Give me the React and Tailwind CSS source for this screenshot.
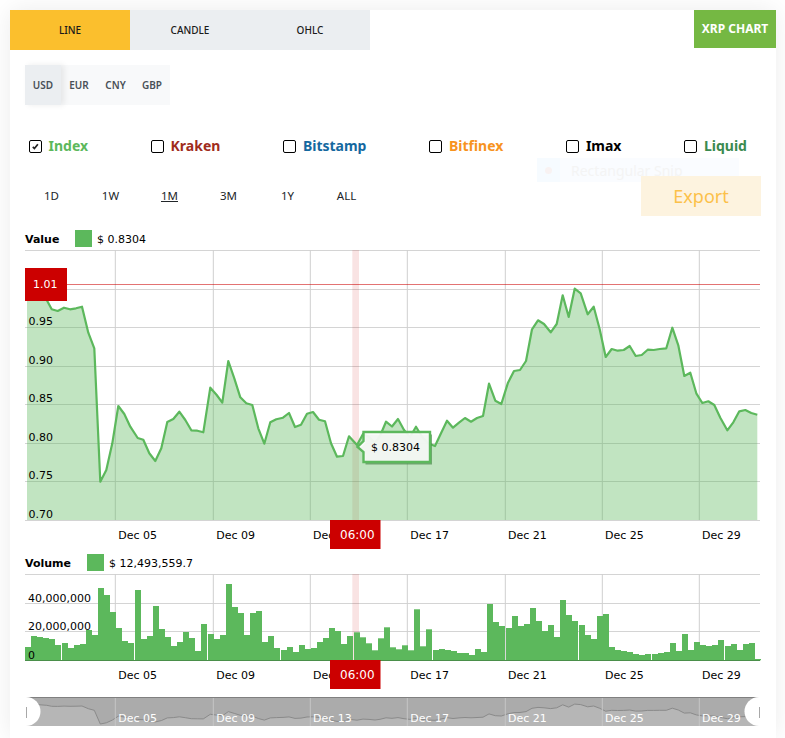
import React from 'react';

const LINE_POINTS = [
  [27, 287], [34, 291], [40, 295], [46.7, 300], [51.7, 309.3], [57.7, 311], [64, 307.7], [70, 309.3], [76, 308.3], [82, 306.7],
  [88.3, 332.7], [94.3, 348.3], [100.3, 481.7], [106.3, 470], [112.3, 443.3], [118.3, 406], [124.3, 414], [130.3, 426.7],
  [137.7, 438], [143.3, 439.7], [149.3, 453.3], [155.3, 461], [161.3, 448.3], [167.3, 422], [173.3, 419], [179.3, 411.7],
  [185.3, 420], [191.3, 430.3], [197.3, 430.7], [203.3, 432.3], [210.3, 387.7], [216.7, 395], [222.3, 402.7], [228.3, 361],
  [234.3, 378.3], [240.3, 397.3], [246.3, 403.3], [252.3, 405], [258.3, 428.3], [264.3, 443.7], [270.3, 422.3], [276.3, 419.3],
  [283, 417.7], [289, 413], [295, 427], [301, 424.7], [307, 413.7], [313, 412], [319, 419.7], [325, 421.3], [331, 443.3],
  [337, 456.7], [343, 456], [349, 436.3], [357, 445], [363, 434], [369, 437], [375, 443], [380, 436], [386, 421.7], [392, 426.5],
  [398, 419], [404, 430], [410, 437], [416, 426.7], [422, 436.7], [428, 443.3], [435, 446], [441, 433.3], [447, 420.7],
  [453, 427.7], [459, 422.7], [465, 418], [471, 421.7], [477, 418], [483, 416], [489, 383.7], [495.3, 400.7], [501.3, 404],
  [508, 382.7], [514, 371], [520, 370], [526, 361], [532, 329.3], [538, 320.3], [544, 324], [550.7, 332.3], [556.7, 324],
  [562.7, 295.3], [568.7, 317], [574.7, 288.7], [580.7, 293.3], [587.7, 314.3], [593.7, 306.7], [599.7, 329.3], [605.7, 357],
  [611.7, 349], [617.7, 350.7], [623.7, 350], [629.7, 346], [635.7, 356], [641.7, 355], [647.7, 349.7], [653.7, 350], [659.7, 349],
  [666.3, 348.3], [672.3, 327.7], [678.3, 345.3], [684.3, 376], [690.3, 372.7], [696.3, 393.3], [702.3, 403], [708.3, 401.3],
  [714.3, 405], [720.3, 417.7], [727.3, 430.3], [733.3, 422.3], [739.3, 411.3], [745.3, 410], [751.3, 413], [757.3, 414.7],
];

// bars are grouped between the daily gaps
const VOLUME_GROUPS = [
  [13.3, 24.3, 23.3, 22.3, 21.3, 15.3],
  [17.3, 12.3, 15.3, 16.3, 30.3, 25.3, 72.3, 65.3, 48.3, 32.3, 19.3, 17.3],
  [70.3, 21.3, 24.3, 54.3, 31.3, 23.3, 14.3, 18.3, 28.3, 22.3, 9.3, 36.3],
  [26.3, 21.3, 25.3, 76.3, 53.3, 47.3, 25.3, 47.3, 49.3, 18.3, 24.3, 12.3],
  [10.3, 13.3, 8.3, 15.3, 11.3, 12.3, 18.3, 22.3, 32.3, 29.3, 16.3, 24.3],
  [28, 23, 17, 10, 22, 33, 13, 11, 15, 10, 51, 14, 31],
  [10.3, 11.3, 10.3, 9.3, 7.3, 7.3, 5.3, 11.3, 8.3, 56.3, 38.3, 34.3],
  [32.3, 44.3, 34.3, 36.3, 52.3, 39.3, 29.3, 35.3, 23.3, 60.3, 45.3, 39.3],
  [35.3, 25.3, 21.3, 44.3, 46.3, 13.3, 10.3, 9.3, 8.3, 6.3, 5.3, 6.3],
  [6.3, 7.3, 8.3, 17.3, 9.3, 26.3, 10.3, 18.3, 15.3, 14.3, 15.3, 20.3],
  [14.3, 16.3, 10.3, 16.3, 17.3, 1.3],
];

const VOLUME_BARS = [];
let barX = 25;
VOLUME_GROUPS.forEach((group) => {
  group.forEach((h) => {
    VOLUME_BARS.push({ x: barX, h });
    barX += 6;
  });
  barX += 1;
});

const GRID_X = [115.3, 213.3, 310.3, 407.3, 505.3, 602.3, 699.3];
const DATE_LABELS = [
  ['Dec 05', 118.3], ['Dec 09', 216.3], ['Dec 13', 313], ['Dec 17', 410.3], ['Dec 21', 508], ['Dec 25', 605], ['Dec 29', 702],
];
const VALUE_GRID_Y = [250.5, 289.5, 327.5, 366.5, 404.5, 443.5, 481.5, 520.5];
const VALUE_LABELS = [['0.95', 325], ['0.90', 364], ['0.85', 402], ['0.80', 441], ['0.75', 479], ['0.70', 518]];

const SOURCES = [
  { name: 'Index', color: 'text-[#5cb85c]', checked: true },
  { name: 'Kraken', color: 'text-[#a02c1c]' },
  { name: 'Bitstamp', color: 'text-[#14689f]' },
  { name: 'Bitfinex', color: 'text-[#f7931e]' },
  { name: 'Imax', color: 'text-black' },
  { name: 'Liquid', color: 'text-[#3a8a4f]' },
];

const toPath = (points) => points.map(([x, y], i) => `${i === 0 ? 'M' : 'L'}${x},${y}`).join(' ');
const navPoints = LINE_POINTS.map(([x, y]) => [x, +(674.4 + y * 0.103).toFixed(1)]);

const chartText = "font-['DejaVu_Sans',sans-serif] text-[11px]";

const TimeAxis = ({ y }) => (
  <>
    {DATE_LABELS.map(([label, x]) => (
      <text key={label} x={x} y={y} className={`${chartText} fill-black`}>{label}</text>
    ))}
  </>
);

const CursorLabel = ({ y }) => (
  <>
    <rect x="330" y={y} width="50.5" height="29" fill="#cc0000" />
    <text x="340" y={y + 19} className={`${chartText} fill-white text-[12px]`}>06:00</text>
  </>
);

const ValueChart = () => (
  <svg viewBox="25 250 736 300" className="ml-[15px] mt-[3px] block h-[300px] w-[736px]">
    {VALUE_GRID_Y.map((y) => (
      <line key={y} x1="25" x2="760" y1={y} y2={y} stroke="#d4d4d4" />
    ))}
    {GRID_X.map((x) => (
      <line key={x} x1={x} x2={x} y1="250" y2="520" stroke="#cfcfcf" />
    ))}
    <rect x="352.3" y="250" width="6.7" height="270" fill="#cc0000" fillOpacity="0.11" />
    <path d={`${toPath(LINE_POINTS)} L757.3,520 L27,520 Z`} fill="#5cb85c" fillOpacity="0.38" />
    <path d={toPath(LINE_POINTS)} fill="none" stroke="#5cb85c" strokeWidth="2.2" strokeLinejoin="round" />
    <line x1="25" x2="760" y1="284.5" y2="284.5" stroke="#cc0000" strokeOpacity="0.55" />
    {VALUE_LABELS.map(([label, y]) => (
      <text key={label} x="28.5" y={y} className={`${chartText} fill-black`}>{label}</text>
    ))}
    <rect x="25" y="268" width="42" height="33" fill="#cc0000" />
    <text x="33" y="288" className={`${chartText} fill-white`}>1.01</text>
    <path d="M365.5,434.5 H432 V464.5 H365.5 V454 L359.5,449 L365.5,443 Z" fill="#4f8a4f" fillOpacity="0.7" />
    <path d="M363.5,432 H430 V462 H363.5 V452 L357.5,447 L363.5,441 Z" fill="#ffffff" fillOpacity="0.9" stroke="#5cb85c" strokeWidth="2.4" />
    <text x="371" y="451" className={`${chartText} fill-black`}>$ 0.8304</text>
    <TimeAxis y={539} />
    <CursorLabel y={520} />
  </svg>
);

const VolumeChart = () => (
  <svg viewBox="25 574 736 116" className="ml-[15px] mt-[3px] block h-[116px] w-[736px]">
    {[574.5, 603.5, 631.5].map((y) => (
      <line key={y} x1="25" x2="760" y1={y} y2={y} stroke="#d4d4d4" />
    ))}
    {GRID_X.map((x) => (
      <line key={x} x1={x} x2={x} y1="574" y2="660" stroke="#cfcfcf" />
    ))}
    <rect x="352.3" y="574" width="6.7" height="86" fill="#cc0000" fillOpacity="0.11" />
    {VOLUME_BARS.map(({ x, h }) => (
      <rect key={x} x={x} y={660.3 - h} width="6" height={h} fill="#5cb85c" />
    ))}
    <line x1="25" x2="760" y1="660.5" y2="660.5" stroke="#4a8f4a" />
    <text x="28" y="602" className={`${chartText} fill-black`}>40,000,000</text>
    <text x="28" y="630" className={`${chartText} fill-black`}>20,000,000</text>
    <text x="28" y="659" className={`${chartText} fill-black`}>0</text>
    <TimeAxis y={679} />
    <CursorLabel y={660} />
  </svg>
);

const NavHandle = ({ cx, barX }) => (
  <>
    <circle cx={cx} cy="711.5" r="14.5" fill="#ffffff" />
    <line x1={barX} x2={barX} y1="707" y2="718" stroke="#a8a8a8" />
  </>
);

const Navigator = () => (
  <svg viewBox="25 697 736 29" className="ml-[15px] mt-[7px] block h-[29px] w-[736px]">
    <rect x="25" y="697" width="735" height="29" fill="#ababab" />
    <path d={`${toPath(navPoints)} L757.3,726 L27,726 Z`} fill="#b6b6b6" />
    <path d={toPath(navPoints)} fill="none" stroke="#8a8a8a" />
    <line x1="25" x2="760" y1="697.5" y2="697.5" stroke="#808080" />
    {GRID_X.map((x) => (
      <line key={x} x1={x} x2={x} y1="698" y2="726" stroke="#c6c6c6" />
    ))}
    {DATE_LABELS.map(([label, x]) => (
      <text key={label} x={x} y="722" className={`${chartText} fill-white`}>{label}</text>
    ))}
    <NavHandle cx={26} barX={26.5} />
    <NavHandle cx={759} barX={759.5} />
  </svg>
);

const SourceCheck = ({ name, color, checked }) => (
  <label className="flex items-center gap-[6.5px]">
    <span className="flex h-[13px] w-[13px] items-center justify-center rounded-[2px] border border-black bg-white">
      {checked && (
        <svg viewBox="0 0 13 13" className="h-[13px] w-[13px]" aria-hidden="true">
          <path d="M3.3 7 L5.2 8.9 L9.3 3.8" fill="none" stroke="#222222" strokeWidth="2" />
        </svg>
      )}
    </span>
    <span className={`text-[14px] font-bold leading-[20px] ${color}`}>{name}</span>
  </label>
);

const LegendRow = ({ title, value, gap }) => (
  <div className="ml-[15px] flex h-[17px] items-center font-['DejaVu_Sans',sans-serif] text-[11px] text-black">
    <span className={`translate-y-[2px] font-bold ${gap}`}>{title}</span>
    <span className="h-[17px] w-[17px] bg-[#5cb85c]" />
    <span className="ml-[5px] translate-y-[2px]">{value}</span>
  </div>
);

export default function App() {
  return (
    <div className="h-[738px] overflow-hidden bg-white pl-[10px] pt-[10px] font-['Noto_Sans',sans-serif]">
      <div className="relative h-[728px] w-[766px] bg-white shadow-[0_0_24px_rgba(0,0,0,0.08)]">
        <div className="flex items-start justify-between">
          <div className="flex">
            <button className="h-[40px] w-[120px] bg-[#fbbf2d] text-[10px] font-medium text-[#1a1a1a]">LINE</button>
            <button className="h-[40px] w-[120px] bg-[#ebeef1] text-[10px] font-medium text-[#1a1a1a]">CANDLE</button>
            <button className="h-[40px] w-[120px] bg-[#ebeef1] text-[10px] font-medium text-[#1a1a1a]">OHLC</button>
          </div>
          <div className="flex h-[38px] w-[82px] items-center justify-center bg-[#75b843] text-[12px] font-bold text-white">XRP CHART</div>
        </div>

        <div className="ml-[15px] mt-[15px] flex h-[40px] w-[145px] bg-[#f8f9fa] text-[10px] font-semibold text-[#495057]">
          <span className="flex w-[36px] items-center justify-center bg-[#ebeef1] shadow-[3px_0_6px_rgba(0,0,0,0.08)]">USD</span>
          <span className="flex w-[36px] items-center justify-center">EUR</span>
          <span className="flex w-[37px] items-center justify-center">CNY</span>
          <span className="flex w-[36px] items-center justify-center">GBP</span>
        </div>

        <div className="ml-[19px] mt-[31px] flex w-[718px] justify-between">
          {SOURCES.map((source) => (
            <SourceCheck key={source.name} {...source} />
          ))}
        </div>

        <div className="relative mt-[20px] flex h-[40px] items-center justify-between pl-[12px] pr-[15px]">
          <div className="flex text-[11.5px] text-[#212529]">
            {['1D', '1W', '1M', '3M', '1Y', 'ALL'].map((range) => (
              <span key={range} className={`w-[59px] text-center ${range === '1M' ? 'underline' : ''}`}>{range}</span>
            ))}
          </div>
          <div className="absolute left-[527px] top-[-18px] flex h-[24px] w-[202px] items-center bg-[#fafcff]">
            <span className="flex h-[24px] w-[23px] items-center justify-center bg-[#f6fbff]">
              <span className="h-[7px] w-[7px] rounded-full bg-[#f8f2f2]" />
            </span>
            <span className="ml-[11px] text-[14px] text-[#f4f4f4]">Rectangular Snip</span>
          </div>
          <button className="relative flex h-[40px] w-[120px] items-center justify-center bg-[#fdf3df] text-[18px] text-[#fcc14a]">Export</button>
        </div>

        <div className="mt-[14px]">
          <LegendRow title="Value" value="$ 0.8304" gap="w-[50px]" />
        </div>
        <ValueChart />

        <div className="mt-[4px]">
          <LegendRow title="Volume" value="$ 12,493,559.7" gap="w-[62px]" />
        </div>
        <VolumeChart />
        <Navigator />
      </div>
    </div>
  );
}
